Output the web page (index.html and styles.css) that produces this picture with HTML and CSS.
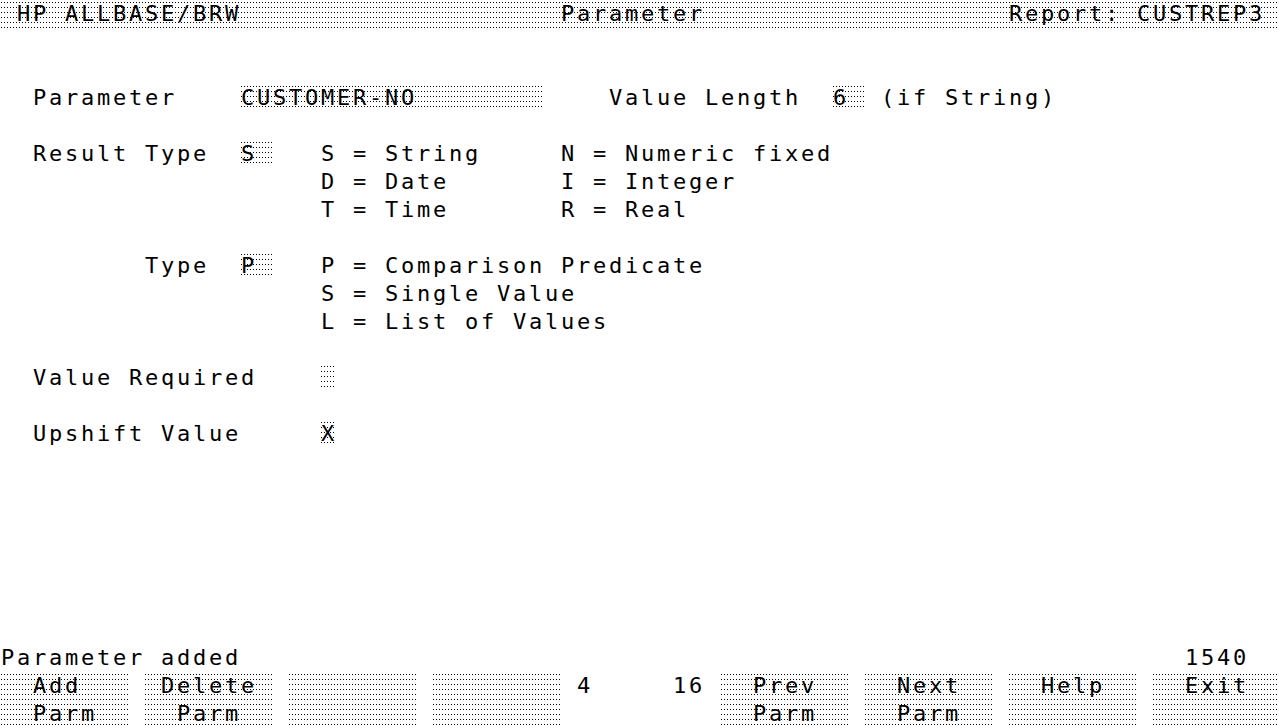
FILE: index.html
```html
<!DOCTYPE html>
<html lang="en">
<head>
<meta charset="utf-8">
<title>HP ALLBASE/BRW - Parameter</title>
<link rel="stylesheet" href="styles.css">
</head>
<body>
<main class="screen">
  <header class="row titlebar dots">
    <span class="c1 s14">HP ALLBASE/BRW</span>
    <span class="c35 s9">Parameter</span>
    <span class="c63 s16">Report: CUSTREP3</span>
  </header>
  <div class="row"></div>
  <div class="row"></div>
  <div class="row">
    <span class="c2 s9">Parameter</span>
    <span class="c15 s19 field dots">CUSTOMER-NO</span>
    <span class="c38 s12">Value Length</span>
    <span class="c52 s2 field dots">6</span>
    <span class="c55 s11">(if String)</span>
  </div>
  <div class="row"></div>
  <div class="row">
    <span class="c2 s11">Result Type</span>
    <span class="c15 s2 field dots">S</span>
    <span class="c20 s10">S = String</span>
    <span class="c35 s17">N = Numeric fixed</span>
  </div>
  <div class="row">
    <span class="c20 s8">D = Date</span>
    <span class="c35 s11">I = Integer</span>
  </div>
  <div class="row">
    <span class="c20 s8">T = Time</span>
    <span class="c35 s8">R = Real</span>
  </div>
  <div class="row"></div>
  <div class="row">
    <span class="c9 s4">Type</span>
    <span class="c15 s2 field dots">P</span>
    <span class="c20 s24">P = Comparison Predicate</span>
  </div>
  <div class="row">
    <span class="c20 s16">S = Single Value</span>
  </div>
  <div class="row">
    <span class="c20 s18">L = List of Values</span>
  </div>
  <div class="row"></div>
  <div class="row">
    <span class="c2 s14">Value Required</span>
    <span class="c20 s1 field dots"></span>
  </div>
  <div class="row"></div>
  <div class="row">
    <span class="c2 s13">Upshift Value</span>
    <span class="c20 s1 field dots">X</span>
  </div>
  <div class="row"></div>
  <div class="row"></div>
  <div class="row"></div>
  <div class="row"></div>
  <div class="row"></div>
  <div class="row"></div>
  <div class="row"></div>
  <div class="row">
    <span class="c0 s15">Parameter added</span>
    <span class="c74 s4">1540</span>
  </div>
  <footer class="keys">
    <div class="key c0 dots"><span class="kl in2">Add</span><span class="kl in2">Parm</span></div>
    <div class="key c9 dots"><span class="kl in1">Delete</span><span class="kl in2">Parm</span></div>
    <div class="key c18 dots"></div>
    <div class="key c27 dots"></div>
    <span class="c36 s1 count">4</span>
    <span class="c42 s2 count">16</span>
    <div class="key c45 dots"><span class="kl in2">Prev</span><span class="kl in2">Parm</span></div>
    <div class="key c54 dots"><span class="kl in2">Next</span><span class="kl in2">Parm</span></div>
    <div class="key c63 dots"><span class="kl in2">Help</span></div>
    <div class="key c72 dots"><span class="kl in2">Exit</span></div>
  </footer>
</main>
</body>
</html>
```

FILE: styles.css
```css
html, body {
  margin: 0;
  padding: 0;
  background: #fff;
  overflow: hidden;
}

.screen {
  display: flex;
  flex-direction: column;
  width: 1280px;
  color: #000;
  font-family: "DejaVu Sans Mono", "Liberation Mono", monospace;
  font-size: 22px;
  line-height: 28px;
  letter-spacing: calc(16px - 0.60205em);
  white-space: pre;
}

.row {
  display: grid;
  grid-template-columns: repeat(80, 16px);
  height: 28px;
}

.row > span {
  grid-row: 1;
  padding-left: 1px;
}

.dots {
  background-image: conic-gradient(at 1px 1px, transparent 75%, #000 0);
  background-size: 3px 5px;
  background-position: 1px 2px;
}

.titlebar {
  width: 1280px;
}

.field {
  height: 27px;
}

.keys {
  display: grid;
  grid-template-columns: repeat(80, 16px);
  grid-template-rows: 28px 28px;
}

.key {
  grid-row: 1 / span 2;
  grid-column-end: span 8;
  display: flex;
  flex-direction: column;
}

.kl {
  height: 28px;
  padding-left: 1px;
}

.kl.in1 { margin-left: 16px; }
.kl.in2 { margin-left: 32px; }

.count {
  grid-row: 1;
  padding-left: 1px;
}

/* column starts (0-based terminal column N -> grid line N+1) */
.c0  { grid-column-start: 1; }
.c1  { grid-column-start: 2; }
.c2  { grid-column-start: 3; }
.c9  { grid-column-start: 10; }
.c15 { grid-column-start: 16; }
.c18 { grid-column-start: 19; }
.c20 { grid-column-start: 21; }
.c27 { grid-column-start: 28; }
.c35 { grid-column-start: 36; }
.c36 { grid-column-start: 37; }
.c38 { grid-column-start: 39; }
.c42 { grid-column-start: 43; }
.c45 { grid-column-start: 46; }
.c52 { grid-column-start: 53; }
.c54 { grid-column-start: 55; }
.c55 { grid-column-start: 56; }
.c63 { grid-column-start: 64; }
.c72 { grid-column-start: 73; }
.c74 { grid-column-start: 75; }

/* spans in character cells */
.s1  { grid-column-end: span 1; }
.s2  { grid-column-end: span 2; }
.s4  { grid-column-end: span 4; }
.s8  { grid-column-end: span 8; }
.s9  { grid-column-end: span 9; }
.s10 { grid-column-end: span 10; }
.s11 { grid-column-end: span 11; }
.s12 { grid-column-end: span 12; }
.s13 { grid-column-end: span 13; }
.s14 { grid-column-end: span 14; }
.s15 { grid-column-end: span 15; }
.s16 { grid-column-end: span 16; }
.s17 { grid-column-end: span 17; }
.s18 { grid-column-end: span 18; }
.s19 { grid-column-end: span 19; }
.s24 { grid-column-end: span 24; }
```
